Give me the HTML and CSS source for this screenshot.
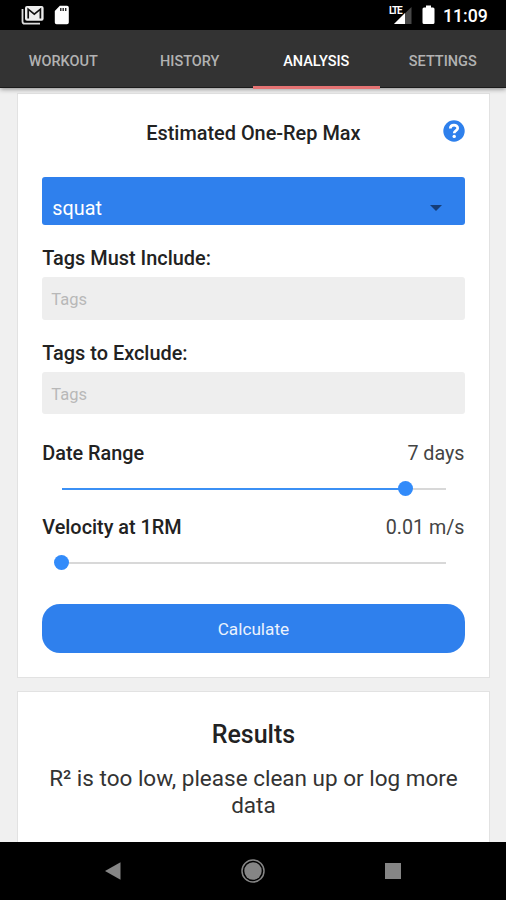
FILE: index.html
```
<!DOCTYPE html>
<html lang="en">
<head>
<meta charset="utf-8">
<title>Analysis</title>
<link rel="stylesheet" href="styles.css">
</head>
<body>
<header class="status">
  <div class="status-group">
    <svg class="mail-icon" width="24" height="20" viewBox="0 0 24 20">
      <path d="M1.500 4v12.400q0 2.200 2.200 2.200H19" fill="none" stroke="#ddd" stroke-width="1.800"/>
      <rect x="4" y="1" width="18.600" height="14.800" rx="2" fill="#eee"/>
      <path d="M7.200 13.500V4.200l6.100 5 6.100-5v9.300" fill="none" stroke="#111" stroke-width="1.700"/>
    </svg>
    <svg class="sd-icon" width="16" height="20" viewBox="0 0 16 20">
      <path d="M5.800.8H13q1.800 0 1.800 1.800v14.800q0 1.800-1.800 1.800H2.600Q.8 19.200.8 17.400V6z" fill="#fff"/>
      <path d="M6.800 3v3M9.200 3v3M11.700 3v3" stroke="#222" stroke-width="1.400"/>
    </svg>
  </div>
  <div class="status-group">
    <div class="signal">
      <svg width="24" height="20" viewBox="0 0 24 20">
        <path d="M22.500 2v17H5z" fill="#484848"/>
        <path d="M16 8v11H5z" fill="#fff"/>
      </svg>
      <span class="lte">LTE</span>
    </div>
    <svg class="battery" width="13" height="20" viewBox="0 0 13 20">
      <path d="M4 .5h5v2h2q1.500 0 1.500 1.500v13.500q0 1.500-1.500 1.500H2Q.5 19 .5 17.500V4Q.5 2.500 2 2.500h2z" fill="#fff"/>
    </svg>
    <span class="clock">11:09</span>
  </div>
</header>
<nav class="tabs">
  <a class="tab">WORKOUT</a>
  <a class="tab">HISTORY</a>
  <a class="tab active">ANALYSIS</a>
  <a class="tab">SETTINGS</a>
</nav>
<main class="content">
  <section class="card form">
    <div class="card-head">
      <h1 class="title">Estimated One-Rep Max</h1>
      <svg class="help" width="22" height="22" viewBox="0 0 22 22">
        <circle cx="11" cy="11" r="10.700" fill="#2e80ec"/>
        <path d="M7.300 8.500C7.300 3.900 14.700 4 14.700 8.200C14.700 10.700 11.200 10.600 11.200 13.200" fill="none" stroke="#fff" stroke-width="2.700"/>
        <circle cx="11.200" cy="16.400" r="1.700" fill="#fff"/>
      </svg>
    </div>
    <div class="select">
      <span>squat</span>
      <svg width="12" height="6" viewBox="0 0 12 6"><path d="M0 0h12L6 6z" fill="#153d78"/></svg>
    </div>
    <div class="label">Tags Must Include:</div>
    <div class="input">Tags</div>
    <div class="label second">Tags to Exclude:</div>
    <div class="input">Tags</div>
    <div class="row date"><span class="name">Date Range</span><span class="value">7 days</span></div>
    <div class="slider"><i class="fill" style="width:344px"></i><i class="thumb"></i><i class="rest"></i></div>
    <div class="row velocity"><span class="name">Velocity at 1RM</span><span class="value">0.01 m/s</span></div>
    <div class="slider"><i class="fill" style="width:0"></i><i class="thumb"></i><i class="rest"></i></div>
    <div class="button">Calculate</div>
  </section>
  <section class="card results">
    <h2 class="results-title">Results</h2>
    <p class="message">R² is too low, please clean up or log more data</p>
  </section>
</main>
<footer class="navbar">
  <svg width="16" height="18" viewBox="0 0 16 18"><path d="M0 9 15.500 .3v17.400z" fill="#858585"/></svg>
  <svg width="24" height="24" viewBox="0 0 24 24"><circle cx="12" cy="12" r="11" fill="none" stroke="#858585" stroke-width="1.500"/><circle cx="12" cy="12" r="8.700" fill="#858585"/></svg>
  <svg width="16" height="16" viewBox="0 0 16 16"><path d="M0 0h16v16H0z" fill="#858585"/></svg>
</footer>
</body>
</html>
```
FILE: styles.css
```
* { box-sizing: border-box; }
body {
  margin: 0;
  width: 506px;
  height: 900px;
  display: flex;
  flex-direction: column;
  overflow: hidden;
  background: #f0f0f0;
  color: #222;
  font-family: Roboto, "Liberation Sans", sans-serif;
}
svg { display: block; flex: none; }
.status {
  flex: none;
  height: 30px;
  display: flex;
  justify-content: space-between;
  padding: 5px 18px 0 21px;
  background: #000;
}
.status-group { display: flex; }
.sd-icon { margin-left: 9px; }
.signal { position: relative; margin-right: 9px; }
.lte {
  position: absolute;
  left: 0;
  top: 0;
  color: #fff;
  font-size: 10px;
  line-height: 11px;
  font-weight: 700;
  letter-spacing: -1.200px;
}
.battery { margin-right: 8px; }
.clock {
  width: 45px;
  color: #fff;
  font-size: 17.700px;
  line-height: 22px;
  font-weight: 500;
  white-space: nowrap;
}
.tabs {
  flex: none;
  height: 58px;
  display: grid;
  grid-template-columns: repeat(4, 1fr);
  background: #333;
  border-bottom: 1px solid #1b1b1b;
  box-shadow: 0 1px 5px rgba(0, 0, 0, .45);
  position: relative;
}
.tab {
  height: 59px;
  padding-top: 1px;
  text-align: center;
  color: #b2b2b2;
  font-size: 14.500px;
  line-height: 61px;
  font-weight: 500;
}
.tab.active { color: #fff; border-bottom: 3px solid #e57373; }
.content {
  flex: 1;
  min-height: 0;
  overflow: hidden;
  padding: 5px 15px 0 17px;
}
.card {
  background: #fff;
  border: 1px solid #e2e2e2;
  width: 473px;
  padding: 0 24.500px 0 24.300px;
}
.form { height: 585px; display: flex; flex-direction: column; }
.card-head {
  height: 83px;
  flex: none;
  display: grid;
  grid-template-columns: 22px 1fr 22px;
  padding-top: 26px;
}
.title {
  grid-column: 2;
  margin: 0;
  text-align: center;
  font-size: 19.900px;
  line-height: 28px;
  font-weight: 500;
}
.select {
  flex: none;
  height: 48px;
  padding: 14px 23px 0 10px;
  display: flex;
  justify-content: space-between;
  background: #2f80ed;
  border-radius: 3px;
  color: #fff;
  font-size: 19.800px;
  line-height: 36px;
}
.select svg { margin-top: 13.500px; }
.label {
  height: 26px;
  margin-top: 20px;
  line-height: 28px;
  font-size: 19.900px;
  font-weight: 500;
  flex: none;
}
.label.second { margin-top: 19.500px; }
.input {
  flex: none;
  height: 43px;
  margin-top: 6px;
  padding-left: 9px;
  border-radius: 3px;
  background: #eee;
  color: #b8b8b8;
  font-size: 16.500px;
  line-height: 46px;
}
.label.second + .input { height: 42.500px; line-height: 45px; }
.row {
  flex: none;
  height: 26px;
  display: flex;
  justify-content: space-between;
  font-size: 19.850px;
  line-height: 28px;
}
.date { margin-top: 26px; }
.velocity { margin-top: 17px; }
.name { font-weight: 500; }
.value { color: #444; font-size: 19.700px; }
.slider {
  flex: none;
  display: flex;
  align-items: center;
  height: 15px;
  margin: 15px 19px 0 19.500px;
}
.fill { height: 2px; background: #3b90f5; }
.thumb {
  flex: none;
  width: 15px;
  height: 15px;
  margin: 0 -7.500px;
  border-radius: 50%;
  background: #328bfa;
  position: relative;
}
.rest { flex: 1; height: 2px; background: #d8d8d8; }
.velocity { margin-top: 18px; }
.button {
  flex: none;
  height: 48.500px;
  margin-top: 34px;
  border-radius: 18px;
  background: #2f80ed;
  color: #eaf2fd;
  text-align: center;
  font-size: 17.200px;
  line-height: 50px;
}
.results {
  height: 170px;
  margin-top: 13px;
  text-align: center;
}
.results-title {
  margin: 28px 0 0;
  font-size: 25px;
  line-height: 30px;
  font-weight: 500;
}
.message {
  margin: 15px 0 0;
  font-size: 22.500px;
  line-height: 26.500px;
  color: #333;
}
.navbar {
  flex: none;
  height: 58px;
  display: flex;
  align-items: center;
  justify-content: space-between;
  padding: 0 105px;
  background: #000;
}
```
